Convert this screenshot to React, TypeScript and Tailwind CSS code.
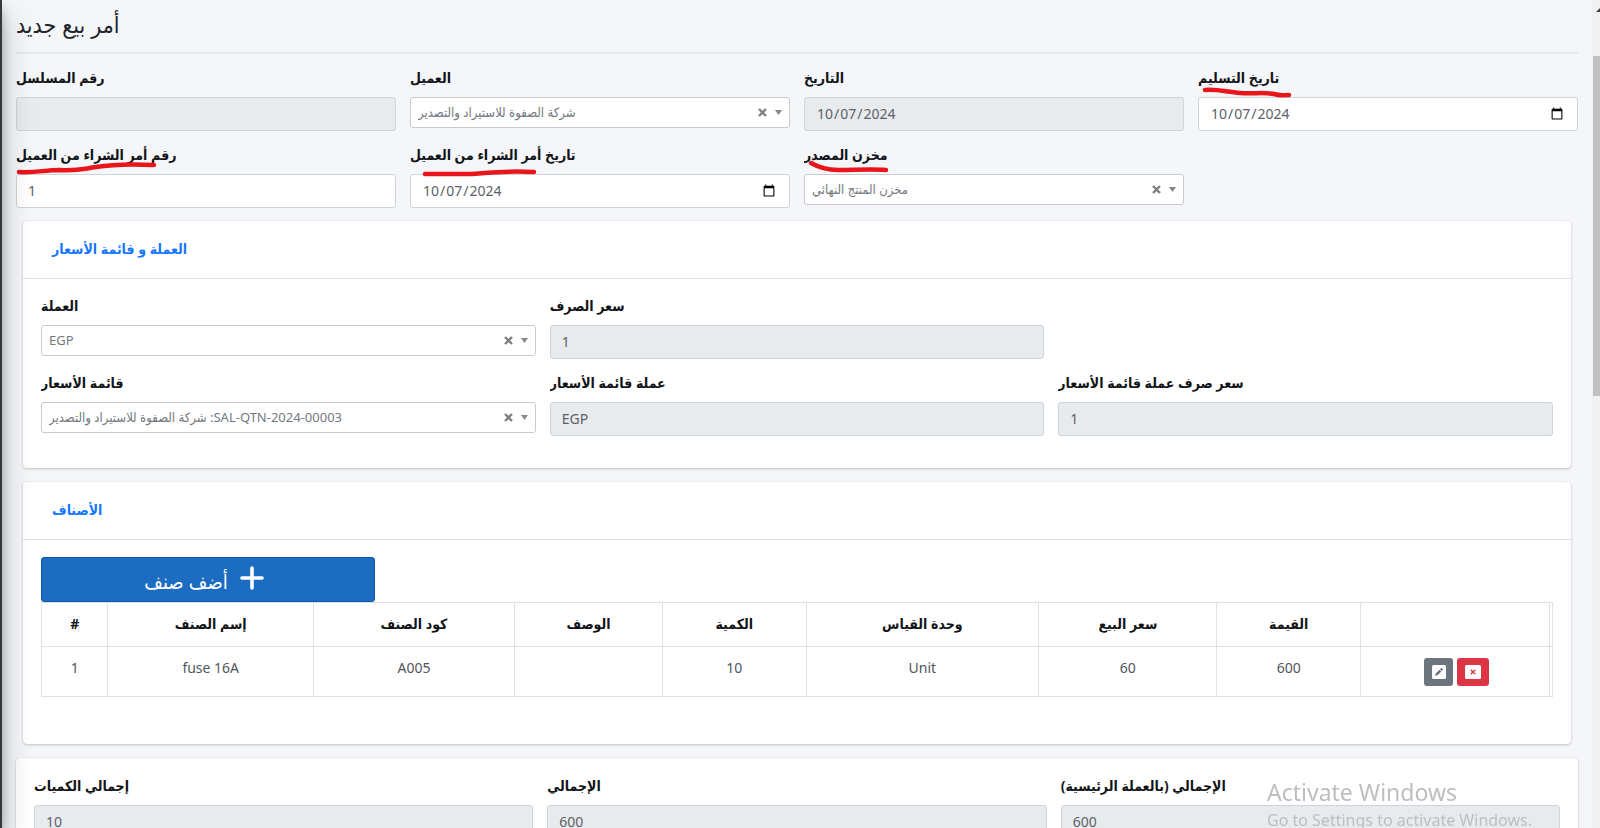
import type { ReactNode } from 'react';

function Field({ id, label, mark, children }: { id: string; label: string; mark?: ReactNode; children: ReactNode }) {
  return (
    <div className="relative min-w-0">
      <label htmlFor={id} dir="rtl" className="mb-[7px] block h-6 truncate text-left text-sm leading-6 font-bold text-[#111417]">
        {label}
      </label>
      {children}
      {mark}
    </div>
  );
}

function Mark({ d }: { d: string }) {
  return (
    <svg aria-hidden="true" className="pointer-events-none absolute top-[18px] left-0 h-4 w-40 overflow-visible" viewBox="0 0 160 16" fill="none">
      <path d={d} stroke="#e8151b" strokeWidth="4.5" strokeLinecap="round" strokeLinejoin="round" />
    </svg>
  );
}

const box = 'block h-[34px] w-full rounded-[3px] border border-[#ced4da] px-[11px] pb-px text-sm text-[#5c6268] outline-none';

function ReadOnly({ id, value }: { id: string; value: string }) {
  return <input id={id} readOnly defaultValue={value} className={`${box} bg-[#e8ebee]`} />;
}

function Picker({ id, value }: { id: string; value: string }) {
  return (
    <div className="relative">
      <select
        id={id}
        dir="rtl"
        className="block h-[31px] w-full appearance-none rounded-[3px] border border-[#c8cbce] bg-white pr-12 pl-[7px] text-left text-[13px] text-[#74797e] outline-none"
      >
        <option>{value}</option>
      </select>
      <div className="pointer-events-none absolute inset-y-0 right-2 flex items-center gap-2">
        <button type="button" aria-label="مسح" className="pointer-events-auto">
          <svg className="size-[9px]" viewBox="0 0 9 9" stroke="#808080" strokeWidth="2.4">
            <path d="M1 1l7 7M8 1L1 8" />
          </svg>
        </button>
        <svg className="h-[5px] w-[7px]" viewBox="0 0 7 5" fill="#888">
          <path d="M0 0h7L3.500 5z" />
        </svg>
      </div>
    </div>
  );
}

function Card({ title, children }: { title: string; children: ReactNode }) {
  return (
    <section className="mx-[7px] rounded bg-white shadow-[0_0_1px_rgba(0,0,0,.13),0_1px_3px_rgba(0,0,0,.2)]">
      <h2 dir="rtl" className="h-[58px] border-b border-[#dfe1e3] px-[29px] pt-4 text-left text-sm leading-6 font-bold text-[#1677ff]">
        {title}
      </h2>
      {children}
    </section>
  );
}

const columns = [
  { label: '#', width: 'w-[4.4%]', value: '1' },
  { label: 'إسم الصنف', width: 'w-[13.6%]', value: 'fuse 16A' },
  { label: 'كود الصنف', width: 'w-[13.3%]', value: 'A005' },
  { label: 'الوصف', width: 'w-[9.8%]', value: '' },
  { label: 'الكمية', width: 'w-[9.5%]', value: '10' },
  { label: 'وحدة القياس', width: 'w-[15.4%]', value: 'Unit' },
  { label: 'سعر البيع', width: 'w-[11.8%]', value: '60' },
  { label: 'القيمة', width: 'w-[9.5%]', value: '600' },
];

const cell = 'border border-[#dee2e6]';

export default function App() {
  return (
    <div className="flex h-screen overflow-hidden bg-[#f4f6f9] font-['Noto_Sans','DejaVu_Sans_Condensed','DejaVu_Sans',sans-serif]">
      <aside className="z-10 -ml-[248px] w-[250px] shrink-0 bg-[#343a40] shadow-[0_14px_28px_rgba(0,0,0,.25),0_10px_10px_rgba(0,0,0,.22)]" />
      <main className="min-w-0 flex-1 overflow-hidden pr-[14px] pl-[14px]">
        <h1 dir="rtl" className="h-[52px] pt-[6px] text-left text-[23px] leading-9 font-light text-[#212529]">
          أمر بيع جديد
        </h1>
        <hr className="mb-3 border-t-2 border-[#e6e8eb]" />

        <form className="mb-[13px] grid grid-cols-4 gap-x-[14px] gap-y-3">
          <Field id="serial" label="رقم المسلسل">
            <ReadOnly id="serial" value="" />
          </Field>
          <Field id="customer" label="العميل">
            <Picker id="customer" value="شركة الصفوة للاستيراد والتصدير" />
          </Field>
          <Field id="date" label="التاريخ">
            <input id="date" type="date" readOnly defaultValue="2024-10-07" className={`${box} bg-[#e8ebee] [&::-webkit-calendar-picker-indicator]:hidden`} />
          </Field>
          <Field id="delivery" label="تاريخ التسليم" mark={<Mark d="M7 6C20 5 28 8 42 9C56 10 66 8 76 10C82 12 86 11 91 11" />}>
            <input id="delivery" type="date" defaultValue="2024-10-07" className={`${box} bg-white`} />
          </Field>
          <Field id="po-number" label="رقم أمر الشراء من العميل" mark={<Mark d="M3 11C20 12 28 9 44 9C62 10 66 8 80 6C98 3 118 3 138 4" />}>
            <input id="po-number" defaultValue="1" className={`${box} bg-white`} />
          </Field>
          <Field id="po-date" label="تاريخ أمر الشراء من العميل" mark={<Mark d="M15 13C34 13 48 13 62 13C82 11 104 10 124 11" />}>
            <input id="po-date" type="date" defaultValue="2024-10-07" className={`${box} bg-white`} />
          </Field>
          <Field id="warehouse" label="مخزن المصدر" mark={<Mark d="M7 2C14 6 22 9 34 9C50 9 68 8 82 9" />}>
            <Picker id="warehouse" value="مخزن المنتج النهائي" />
          </Field>
        </form>

        <div className="flex flex-col gap-[14px]">
          <Card title="العملة و قائمة الأسعار">
            <div className="grid grid-cols-3 gap-x-[14px] gap-y-3 px-[18px] pt-[15px] pb-8">
              <Field id="currency" label="العملة">
                <Picker id="currency" value="EGP" />
              </Field>
              <Field id="rate" label="سعر الصرف">
                <ReadOnly id="rate" value="1" />
              </Field>
              <div />
              <Field id="price-list" label="قائمة الأسعار">
                <Picker id="price-list" value="SAL-QTN-2024-00003: شركة الصفوة للاستيراد والتصدير" />
              </Field>
              <Field id="list-currency" label="عملة قائمة الأسعار">
                <ReadOnly id="list-currency" value="EGP" />
              </Field>
              <Field id="list-rate" label="سعر صرف عملة قائمة الأسعار">
                <ReadOnly id="list-rate" value="1" />
              </Field>
            </div>
          </Card>

          <Card title="الأصناف">
            <div className="px-[18px] pt-[17px] pb-[47px]">
              <button
                type="button"
                dir="rtl"
                className="flex h-[45px] w-[334px] items-center justify-center gap-3 rounded-[3px] border border-[#0b57a8] bg-[#1c6dc1] pr-2 text-xl text-white"
              >
                <svg aria-hidden="true" className="mb-1 size-6" viewBox="0 0 24 24" stroke="currentColor" strokeWidth="3.6" strokeLinecap="round">
                  <path d="M12 2v20M2 12h20" />
                </svg>
                <span className="pt-1">أضف صنف</span>
              </button>
              <table className="w-full table-fixed border-collapse text-center text-sm leading-6 text-[#50565c]">
                <thead>
                  <tr className="h-11 text-[#111417]">
                    {columns.map((c) => (
                      <th key={c.label} scope="col" className={`${cell} ${c.width} pb-px font-bold`}>
                        {c.label}
                      </th>
                    ))}
                    <th className={`${cell} w-[12.5%]`} />
                    <th className={cell} />
                  </tr>
                </thead>
                <tbody>
                  <tr className="h-[50px]">
                    {columns.map((c) => (
                      <td key={c.label} className={`${cell} pt-[9px] align-top`}>
                        {c.value}
                      </td>
                    ))}
                    <td className={cell}>
                      <div className="flex justify-center gap-1 pl-1">
                        <button type="button" aria-label="تعديل" className="flex h-7 w-[29px] items-center justify-center rounded-[3px] bg-[#6c757d]">
                          <svg aria-hidden="true" className="size-[14px]" viewBox="0 0 14 14">
                            <rect width="14" height="14" rx="1.5" fill="#fff" />
                            <path d="M3.200 10.800l.5-2.300 3.800-3.800 1.800 1.800-3.800 3.800zM8 4.200l1-1q.5-.4 1 0l.8.8q.4.5 0 1l-1 1z" fill="#6c757d" />
                          </svg>
                        </button>
                        <button type="button" aria-label="حذف" className="flex h-7 w-8 items-center justify-center rounded-[3px] bg-[#dc3545]">
                          <svg aria-hidden="true" className="h-[14px] w-4" viewBox="0 0 16 14">
                            <rect width="16" height="14" rx="1.5" fill="#fff" />
                            <path d="M5.700 4.700l4.600 4.600M10.300 4.700L5.700 9.300" stroke="#dc3545" strokeWidth="1.300" />
                          </svg>
                        </button>
                      </div>
                    </td>
                    <td className={cell} />
                  </tr>
                </tbody>
              </table>
            </div>
          </Card>

          <section className="grid grid-cols-3 gap-x-[14px] rounded bg-white px-[18px] pt-4 pb-8 shadow-[0_0_1px_rgba(0,0,0,.13),0_1px_3px_rgba(0,0,0,.2)]">
            <Field id="total-qty" label="إجمالي الكميات">
              <ReadOnly id="total-qty" value="10" />
            </Field>
            <Field id="total" label="الإجمالي">
              <ReadOnly id="total" value="600" />
            </Field>
            <Field id="total-base" label="الإجمالي (بالعملة الرئيسية)">
              <ReadOnly id="total-base" value="600" />
            </Field>
          </section>
        </div>
      </main>

      <div aria-hidden="true" className="flex w-2 shrink-0 flex-col items-end bg-[#f1f1f1]">
        <svg className="mt-2 mb-[43px] h-[5px] w-1" viewBox="0 0 4 5" fill="#404040">
          <path d="M0 4L4 0v4z" />
        </svg>
        <div className="h-[340px] w-[7px] bg-[#c1c1c1]" />
      </div>

      <div className="pointer-events-none fixed right-[68px] bottom-[-4px] text-[#bcbec0]">
        <p className="text-[23px] leading-8">Activate Windows</p>
        <p className="text-base leading-6">Go to Settings to activate Windows.</p>
      </div>
    </div>
  );
}
